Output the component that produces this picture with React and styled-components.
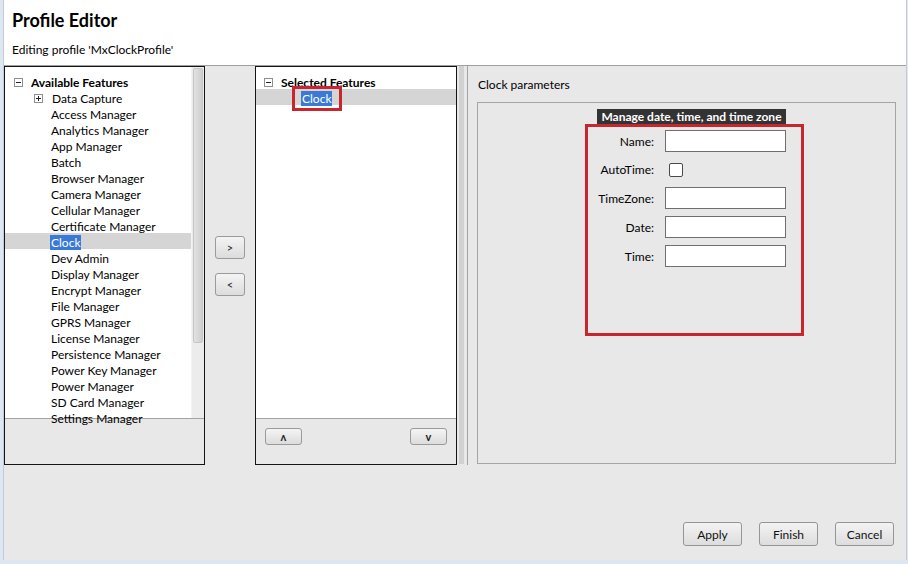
import React from "react";
import styled, { createGlobalStyle, css } from "styled-components";

const GlobalStyle = createGlobalStyle`
  html, body { margin: 0; padding: 0; }
  body {
    font-family: Lato, "Open Sans", "Liberation Sans", sans-serif;
    font-size: 12px;
    color: #000;
    background: #dde7f2;
  }
`;

const available = [
  "Data Capture",
  "Access Manager",
  "Analytics Manager",
  "App Manager",
  "Batch",
  "Browser Manager",
  "Camera Manager",
  "Cellular Manager",
  "Certificate Manager",
  "Clock",
  "Dev Admin",
  "Display Manager",
  "Encrypt Manager",
  "File Manager",
  "GPRS Manager",
  "License Manager",
  "Persistence Manager",
  "Power Key Manager",
  "Power Manager",
  "SD Card Manager",
  "Settings Manager",
];

const fields = [
  { label: "Name:", type: "text" },
  { label: "AutoTime:", type: "check" },
  { label: "TimeZone:", type: "text" },
  { label: "Date:", type: "text" },
  { label: "Time:", type: "text" },
];

const Frame = styled.div`
  width: 908px;
  height: 564px;
  box-sizing: border-box;
  padding: 0 1px 4px 3px;
  background: #dde7f2;
`;

const Dialog = styled.div`
  height: 560px;
  display: flex;
  flex-direction: column;
  background: #e8e8e8;
  border-left: 1px solid #c3cbd5;
  border-right: 1px solid #c3cbd5;
`;

const Header = styled.div`
  height: 65px;
  background: #fff;
  border-bottom: 1px solid #a0a0a0;
  padding-left: 8px;
`;

const Title = styled.h1`
  margin: 0;
  padding-top: 9px;
  font-size: 18px;
  line-height: 22px;
  font-weight: bold;
`;

const Subtitle = styled.div`
  margin-top: 11px;
  font-size: 12px;
  line-height: 16px;
`;

const Main = styled.div`
  display: flex;
  height: 399px;
`;

const Panel = styled.div`
  width: ${(p) => p.$width}px;
  box-sizing: border-box;
  border: 1px solid #141414;
  display: flex;
  flex-direction: column;
`;

const ListArea = styled.div`
  flex: 1;
  display: flex;
  background: #fff;
  border-bottom: 1px solid #a3a3a3;
  min-height: 0;
`;

const Tree = styled.div`
  flex: 1;
  padding-top: 6px;
`;

const Row = styled.div`
  height: 16px;
  box-sizing: border-box;
  padding-top: 2px;
  line-height: 15px;
  display: flex;
  align-items: center;
  gap: 8px;
  padding-left: ${(p) => p.$indent}px;
  white-space: nowrap;
  background: ${(p) => (p.$current ? "#d5d5d5" : "transparent")};
  font-weight: ${(p) => (p.$bold ? "bold" : "normal")};
`;

const Label = styled.span`
  position: relative;
  padding: 0 1px;
  ${(p) =>
    p.$selected &&
    css`
      background: #3a7ad6;
      color: #fff;
    `}
  ${(p) =>
    p.$marked &&
    css`
      &::after {
        content: "";
        position: absolute;
        left: -9px;
        right: -10px;
        top: -5px;
        bottom: -5px;
        border: 3px solid #c9252d;
      }
    `}
`;

const Scrollbar = styled.div`
  width: 13px;
  background: #ececec;
  border-left: 1px solid #f4f4f4;
  padding: 1px 1px 0 1px;
  box-sizing: border-box;
`;

const Thumb = styled.div`
  height: 273px;
  border: 1px solid #c6c6c6;
  border-radius: 2px;
  background: linear-gradient(90deg, #e2e2e2, #d6d6d6 60%, #cfcfcf);
`;

const PanelFooter = styled.div`
  height: 36px;
  display: flex;
  justify-content: space-between;
  align-items: flex-start;
  padding: 9px 9px 0;
`;

const SmallButton = styled.button`
  width: ${(p) => p.$w}px;
  height: ${(p) => p.$h}px;
  padding: 0;
  border: 1px solid #9a9a9a;
  border-radius: 3px;
  background: linear-gradient(#f4f4f4, #dcdcdc);
  font-family: inherit;
  font-size: 11px;
  font-weight: ${(p) => (p.$bold ? "bold" : "normal")};
  color: #222;
  line-height: 1;
`;

const MoveColumn = styled.div`
  width: 50px;
  display: flex;
  flex-direction: column;
  align-items: center;
  gap: 14px;
  padding-top: 170px;
`;

const Splitter = styled.div`
  width: 5px;
  margin: 0 3px 1px 2px;
  background-color: #e4e4e4;
  background-image: radial-gradient(#8e8e8e 0.55px, transparent 0.75px);
  background-size: 2px 2px;
`;

const RightPanel = styled.div`
  flex: 1;
  border-left: 1px solid #a3a3a3;
  padding: 10px 10px 1px 9px;
  display: flex;
  flex-direction: column;
`;

const SectionLabel = styled.div`
  line-height: 18px;
  margin-bottom: 8px;
  padding-left: 1px;
`;

const ParamBox = styled.div`
  flex: 1;
  border: 1px solid #a5a5a5;
  padding: 6px 0 0 107px;
`;

const BoxHeading = styled.div`
  width: 189px;
  height: 15px;
  line-height: 15px;
  margin-left: 12px;
  background: #333;
  color: #fff;
  font-weight: bold;
  text-align: center;
  white-space: nowrap;
`;

const FormFrame = styled.div`
  width: 219px;
  height: 212px;
  box-sizing: border-box;
  border: 3px solid #c9252d;
  padding: 3px 0 0 9px;
`;

const FormGrid = styled.div`
  display: grid;
  grid-template-columns: 57px 121px;
  grid-template-rows: 22px 21px 22px 22px 22px;
  column-gap: 11px;
  row-gap: 7px;
`;

const FieldLabel = styled.label`
  text-align: right;
  align-self: center;
  white-space: nowrap;
`;

const TextBox = styled.input`
  box-sizing: border-box;
  width: 121px;
  height: 22px;
  margin: 0;
  border: 1px solid #6f6f6f;
  background: #fff;
`;

const CheckBox = styled.span`
  align-self: center;
  width: 14px;
  height: 14px;
  margin-left: 4px;
  box-sizing: border-box;
  border: 1px solid #4a4a4a;
  border-radius: 2px;
  background: #fff;
`;

const Footer = styled.div`
  flex: 1;
  display: flex;
  justify-content: flex-end;
  align-items: flex-end;
  gap: 17px;
  padding: 0 12px 14px 0;
`;

const DialogButton = styled.button`
  width: 59px;
  height: 24px;
  padding: 0;
  border: 1px solid #959595;
  border-radius: 3px;
  background: linear-gradient(#f3f3f3, #dddddd);
  font-family: inherit;
  font-size: 12px;
  color: #111;
`;

const ExpandIcon = ({ open }) => (
  <svg width="9" height="9" viewBox="0 0 9 9" style={{ flex: "none" }}>
    <rect x="0.5" y="0.5" width="8" height="8" fill="#fff" stroke="#8f8f8f" />
    <path d="M2 4.5h5" stroke="#222" />
    {!open && <path d="M4.5 2v5" stroke="#222" />}
  </svg>
);

export default function App() {
  return (
    <Frame>
      <GlobalStyle />
      <Dialog>
        <Header>
          <Title>Profile Editor</Title>
          <Subtitle>Editing profile 'MxClockProfile'</Subtitle>
        </Header>
        <Main>
          <Panel $width={201}>
            <ListArea>
              <Tree>
                <Row $indent={9} $bold>
                  <ExpandIcon open />
                  <span>Available Features</span>
                </Row>
                {available.map((name, i) =>
                  i === 0 ? (
                    <Row key={name} $indent={29}>
                      <ExpandIcon />
                      <Label>{name}</Label>
                    </Row>
                  ) : (
                    <Row key={name} $indent={45} $current={name === "Clock"}>
                      <Label $selected={name === "Clock"}>{name}</Label>
                    </Row>
                  )
                )}
              </Tree>
              <Scrollbar>
                <Thumb />
              </Scrollbar>
            </ListArea>
            <PanelFooter />
          </Panel>

          <MoveColumn>
            <SmallButton $w={30} $h={23}>&gt;</SmallButton>
            <SmallButton $w={30} $h={23}>&lt;</SmallButton>
          </MoveColumn>

          <Panel $width={202}>
            <ListArea>
              <Tree>
                <Row $indent={8} $bold>
                  <ExpandIcon open />
                  <span>Selected Features</span>
                </Row>
                <Row $indent={45} $current>
                  <Label $selected $marked>
                    Clock
                  </Label>
                </Row>
              </Tree>
            </ListArea>
            <PanelFooter>
              <SmallButton $w={37} $h={17} $bold>ʌ</SmallButton>
              <SmallButton $w={37} $h={17} $bold>v</SmallButton>
            </PanelFooter>
          </Panel>

          <Splitter />

          <RightPanel>
            <SectionLabel>Clock parameters</SectionLabel>
            <ParamBox>
              <BoxHeading>Manage date, time, and time zone</BoxHeading>
              <FormFrame>
                <FormGrid>
                  {fields.map((f) => (
                    <React.Fragment key={f.label}>
                      <FieldLabel>{f.label}</FieldLabel>
                      {f.type === "check" ? <CheckBox /> : <TextBox type="text" />}
                    </React.Fragment>
                  ))}
                </FormGrid>
              </FormFrame>
            </ParamBox>
          </RightPanel>
        </Main>
        <Footer>
          <DialogButton>Apply</DialogButton>
          <DialogButton>Finish</DialogButton>
          <DialogButton>Cancel</DialogButton>
        </Footer>
      </Dialog>
    </Frame>
  );
}
